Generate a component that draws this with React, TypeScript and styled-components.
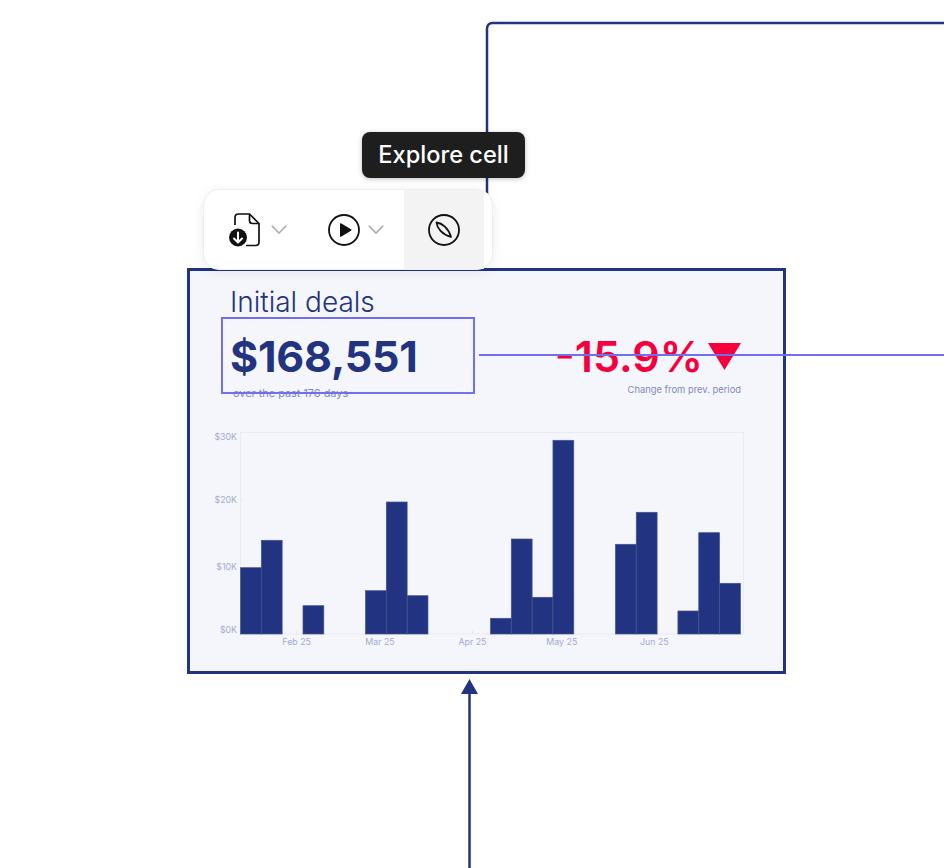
import React from "react";
import styled, { createGlobalStyle } from "styled-components";

const GlobalStyle = createGlobalStyle`
  html, body {
    margin: 0;
    padding: 0;
    background: #fff;
    font-family: "Inter", "Liberation Sans", sans-serif;
  }
`;

const NAVY = "#22337f";
const VIOLET = "#7070ee";
const RED = "#f5003c";

/**
 * Free canvas the nodes and connectors are placed on.
 */
const Canvas = styled.div`
  position: relative;
  width: 944px;
  height: 868px;
  overflow: hidden;
`;

const Connector = styled.svg<{ $front?: boolean }>`
  position: absolute;
  top: 0;
  left: 0;
  z-index: ${(props) => (props.$front ? 2 : 0)};
`;

const Tooltip = styled.div`
  position: absolute;
  top: 132px;
  left: 362px;
  width: 163px;
  height: 45px;
  padding-bottom: 1px;
  display: flex;
  align-items: center;
  justify-content: center;
  background: #1e1e1e;
  color: #fff;
  border-radius: 8px;
  font-size: 23.6px;
  font-weight: 500;
  box-shadow: 0 1px 5px rgba(0, 0, 0, 0.25);
  z-index: 4;
`;

const Toolbar = styled.div`
  position: absolute;
  top: 189px;
  left: 203px;
  width: 290px;
  height: 81px;
  box-sizing: border-box;
  display: flex;
  align-items: stretch;
  padding: 0 8px 0 24px;
  background: #fff;
  border: 1px solid #efefef;
  border-radius: 16px;
  box-shadow: 0 2px 12px rgba(0, 0, 0, 0.08);
  z-index: 3;
`;

const ToolButton = styled.div<{ $width: number; $gap?: number; $active?: boolean }>`
  width: ${(props) => props.$width}px;
  display: flex;
  align-items: center;
  justify-content: ${(props) => (props.$active ? "center" : "flex-start")};
  gap: ${(props) => props.$gap ?? 0}px;
  background: ${(props) => (props.$active ? "#f3f3f3" : "transparent")};
`;

const Card = styled.section`
  position: absolute;
  top: 268px;
  left: 187px;
  width: 599px;
  height: 406px;
  box-sizing: border-box;
  border: 3px solid ${NAVY};
  background: #f5f6fb;
  z-index: 1;
`;

const CardHeader = styled.div`
  padding: 15px 42px 0 40px;
`;

const Title = styled.h2`
  margin: 0;
  height: 33px;
  font-size: 28px;
  line-height: 33px;
  font-weight: 300;
  color: ${NAVY};
`;

const StatsRow = styled.div`
  display: flex;
  justify-content: space-between;
  margin-top: 13px;
`;

const StatColumn = styled.div<{ $right?: boolean }>`
  display: flex;
  flex-direction: column;
  align-items: ${(props) => (props.$right ? "flex-end" : "flex-start")};
`;

const BigValue = styled.div`
  height: 48px;
  font-size: 43px;
  line-height: 48px;
  font-weight: 700;
  letter-spacing: -0.2px;
  color: ${NAVY};
`;

const Delta = styled.div`
  display: flex;
  align-items: center;
  gap: 5px;
  height: 48px;
  font-size: 43px;
  line-height: 48px;
  font-weight: 600;
  color: ${RED};
`;

const SubLabel = styled.div<{ $left?: number; $top: number; $size: number }>`
  margin-left: ${(props) => props.$left ?? 0}px;
  margin-top: ${(props) => props.$top}px;
  font-size: ${(props) => props.$size}px;
  line-height: 14px;
  color: #7f8abb;
`;

const Chart = styled.svg`
  display: block;
  margin-top: 20px;
`;

const AxisText = styled.text`
  font-family: "Inter", "Liberation Sans", sans-serif;
  font-size: 8.8px;
  fill: #a3aad4;
`;

const Selection = styled.div`
  position: absolute;
  top: 317px;
  left: 221px;
  width: 254px;
  height: 77px;
  box-sizing: border-box;
  border: 2px solid ${VIOLET};
  z-index: 2;
`;

const FileIcon = () => (
  <svg width="34" height="36" viewBox="0 0 34 36" fill="none">
    <path
      d="M7 13V5.5C7 3.3 8.6 2 10.5 2H21.5L31 11.500V30C31 32.200 29.700 33.500 27.500 33.500H18"
      stroke="#111"
      strokeWidth="1.700"
      strokeLinejoin="round"
    />
    <path d="M21.500 2.500V8.500C21.500 10.500 22.700 11.500 24.500 11.500H30.500" stroke="#111" strokeWidth="1.700" />
    <circle cx="10" cy="25.500" r="9" fill="#111" />
    <path
      d="M10 20.500V30M6 26.500L10 30.500L14 26.500"
      stroke="#fff"
      strokeWidth="2"
      strokeLinecap="round"
      strokeLinejoin="round"
    />
  </svg>
);

const PlayIcon = () => (
  <svg width="32" height="32" viewBox="0 0 32 32" fill="none">
    <circle cx="16" cy="16" r="15" stroke="#111" strokeWidth="1.800" />
    <path d="M12 9.800C12 9.200 12.500 9 13 9.300L23 15.200C23.600 15.600 23.600 16.400 23 16.800L13 22.700C12.500 23 12 22.800 12 22.200Z" fill="#111" />
  </svg>
);

const ExploreIcon = () => (
  <svg width="32" height="32" viewBox="0 0 32 32" fill="none">
    <circle cx="16" cy="16" r="15" stroke="#111" strokeWidth="1.800" />
    <path
      d="M8.500 8.500C14 9 20.500 14 23 23C14 20.500 9 14 8.500 8.500Z"
      stroke="#111"
      strokeWidth="1.800"
      strokeLinejoin="round"
    />
  </svg>
);

const Chevron = () => (
  <svg width="16" height="9" viewBox="0 0 16 9" fill="none">
    <path d="M0.800 0.800L8 8L15.200 0.800" stroke="#a9a9a9" strokeWidth="1.600" />
  </svg>
);

// Top edge of each bar, in page pixels. Null means no bar for that week.
const BAR_TOPS: (number | null)[] = [
  567.7, 540.3, null, 605.7, null, null, 590.7, 502, 595.7, null, null, null,
  618.3, 539, 597.3, 440.3, null, null, 544.3, 512.3, null, 611, 532.7, 583.3,
];

const BASE_Y = 634;
const BAR_LEFT = 240.500;
const BAR_WIDTH = 20.830;

const Y_LABELS = [
  { text: "$30K", y: 440 },
  { text: "$20K", y: 503 },
  { text: "$10K", y: 570 },
  { text: "$0K", y: 633 },
];

const X_LABELS = [
  { text: "Feb 25", x: 296.600 },
  { text: "Mar 25", x: 380 },
  { text: "Apr 25", x: 472.500 },
  { text: "May 25", x: 561.800 },
  { text: "Jun 25", x: 654.300 },
];

const App: React.FC = () => (
  <>
    <GlobalStyle />
    <Canvas>
      <Connector width="944" height="868" viewBox="0 0 944 868" fill="none">
        <path d="M487 200V29C487 25.500 489 23 492.500 23H944" stroke={NAVY} strokeWidth="2.500" />
        <path d="M469.500 868V692" stroke={NAVY} strokeWidth="2.500" />
        <path d="M469.500 679L478 694H461Z" fill={NAVY} />
      </Connector>

      <Card>
        <CardHeader>
          <Title>Initial deals</Title>
          <StatsRow>
            <StatColumn>
              <BigValue>$168,551</BigValue>
              <SubLabel $left={3} $top={6} $size={10.9}>
                over the past 176 days
              </SubLabel>
            </StatColumn>
            <StatColumn $right>
              <Delta>
                -15.9%
                <svg width="33" height="27" viewBox="0 0 33 27">
                  <path d="M0 0H33L16.500 27Z" fill={RED} />
                </svg>
              </Delta>
              <SubLabel $top={3} $size={9.400}>
                Change from prev. period
              </SubLabel>
            </StatColumn>
          </StatsRow>
        </CardHeader>

        <Chart width="593" height="240" viewBox="190 420 593 240">
          <rect x="240.500" y="432.500" width="503" height="201.500" fill="none" stroke="#e9ebf2" />
          {BAR_TOPS.map((top, i) =>
            top === null ? null : (
              <rect
                key={i}
                x={BAR_LEFT + i * BAR_WIDTH}
                y={top}
                width={BAR_WIDTH}
                height={BASE_Y - top}
                fill="#223382"
                stroke="#45548f"
                strokeWidth="0.700"
              />
            ),
          )}
          <path d="M296.600 631V634M472.500 631V634M243 500H240.500" stroke="#e3e5ee" />
          {Y_LABELS.map((label) => (
            <AxisText key={label.text} x="237" y={label.y} textAnchor="end">
              {label.text}
            </AxisText>
          ))}
          {X_LABELS.map((label) => (
            <AxisText key={label.text} x={label.x} y="645" textAnchor="middle">
              {label.text}
            </AxisText>
          ))}
        </Chart>
      </Card>

      <Selection />
      <Connector $front width="944" height="868" viewBox="0 0 944 868" fill="none">
        <path d="M479 355H944" stroke={VIOLET} strokeWidth="2" />
      </Connector>

      <Toolbar>
        <ToolButton $width={100} $gap={9}>
          <FileIcon />
          <Chevron />
        </ToolButton>
        <ToolButton $width={77} $gap={8}>
          <PlayIcon />
          <Chevron />
        </ToolButton>
        <ToolButton $width={80} $active>
          <ExploreIcon />
        </ToolButton>
      </Toolbar>

      <Tooltip>Explore cell</Tooltip>
    </Canvas>
  </>
);

export default App;
